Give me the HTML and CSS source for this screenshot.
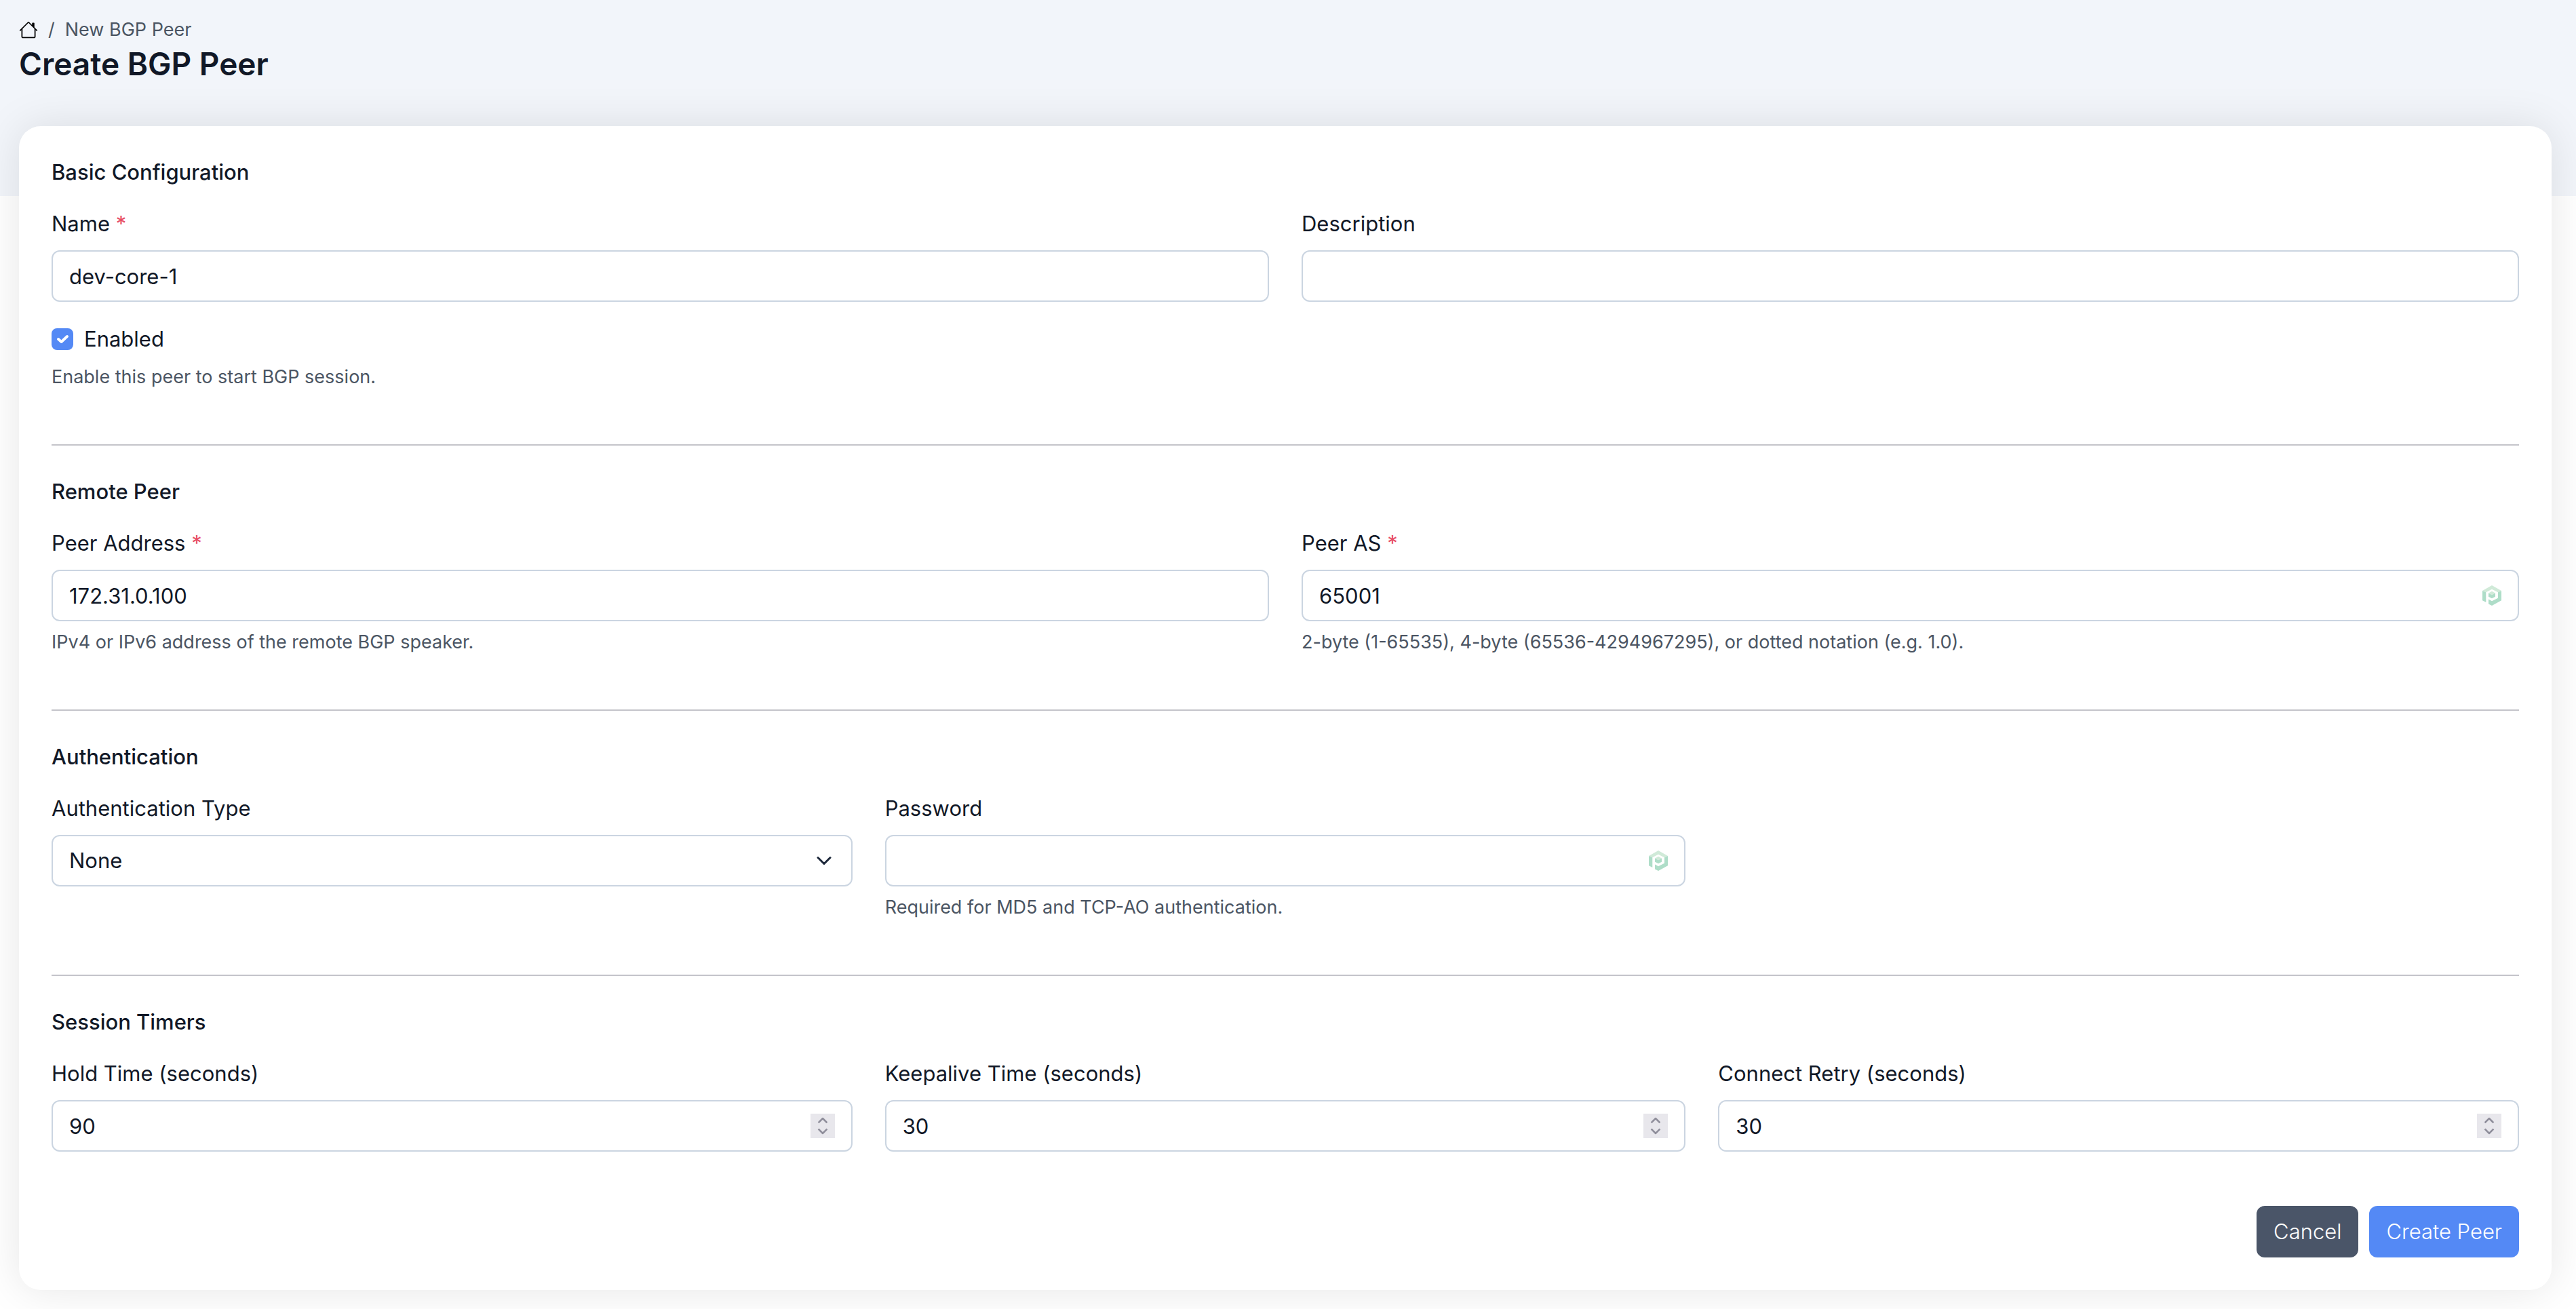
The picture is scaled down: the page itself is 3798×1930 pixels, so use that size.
FILE: index.html
```
<!DOCTYPE html>
<html lang="en">
<head>
  <meta charset="UTF-8">
  <meta name="viewport" content="width=device-width, initial-scale=1.0">
  <title>Create BGP Peer</title>
  <link rel="stylesheet" href="styles.css">
</head>
<body>
  <!-- Shared icons -->
  <svg class="sprite" aria-hidden="true">
    <symbol id="icon-pass" viewBox="0 0 28 30">
      <path fill="#d0ead8" d="M14 0 28 8 23 10.300 14 5.700 5.300 10.300 0 8z"/>
      <path fill="#aeddc8" d="M0 8 5.300 10.300V25L0 22.300z"/>
      <path fill="#aeddc8" d="M28 8V22.300L14 30 9 27.500V20.600L14 23.300 23 18.700V10.300z"/>
      <path fill="#d0ead8" d="M14 8.700 19 11.500 14 14.300 9 11.500z"/>
      <path fill="#aeddc8" d="M9 11.500 14 14.300 19 11.500V16.700L14 19.300 9 16.700z"/>
    </symbol>
    <symbol id="icon-spin" viewBox="0 0 36 36">
      <path fill="#e8e7ec" d="M0 0h36v36H0z"/>
      <path fill="none" stroke="#8f8e9b" stroke-width="2.500" stroke-linecap="square" stroke-linejoin="round" d="M12.500 12.500 18 7l5.500 5.500M12.500 23.500 18 29l5.500-5.500"/>
    </symbol>
  </svg>

  <header class="page-header">
    <nav class="breadcrumb" aria-label="Breadcrumb">
      <a href="#" aria-label="Home">
        <svg class="icon-home" viewBox="0 0 16 16"><path fill="#000" d="M8.707 1.500a1 1 0 0 0-1.414 0L.646 8.146a.5.5 0 0 0 .708.708L2 8.207V13.500A1.500 1.500 0 0 0 3.500 15h9a1.500 1.500 0 0 0 1.500-1.500V8.207l.646.647a.5.5 0 0 0 .708-.708L13 5.793V2.500a.5.5 0 0 0-.5-.5h-1a.5.5 0 0 0-.5.5v1.293zM13 7.207V13.500a.5.5 0 0 1-.5.5h-9a.5.5 0 0 1-.5-.5V7.207l5-5z"/></svg>
      </a>
      <span>/</span>
      <span>New BGP Peer</span>
    </nav>
    <h1>Create BGP Peer</h1>
  </header>

  <main>
    <form class="card">
      <section>
        <h2>Basic Configuration</h2>
        <div class="row cols-2">
          <div class="field">
            <label for="name">Name <span class="required">*</span></label>
            <input class="control" type="text" id="name" value="dev-core-1">
          </div>
          <div class="field">
            <label for="description">Description</label>
            <input class="control" type="text" id="description">
          </div>
        </div>
        <div class="check">
          <span class="check-box">
            <input type="checkbox" id="enabled" checked>
            <svg viewBox="0 0 32 32"><path fill="none" stroke="#fff" stroke-width="4" stroke-linecap="round" stroke-linejoin="round" d="M10 16l4.500 4L23 12"/></svg>
          </span>
          <label for="enabled">Enabled</label>
        </div>
        <p class="help">Enable this peer to start BGP session.</p>
      </section>

      <hr>

      <section>
        <h2>Remote Peer</h2>
        <div class="row cols-2">
          <div class="field">
            <label for="address">Peer Address <span class="required">*</span></label>
            <input class="control" type="text" id="address" value="172.31.0.100">
            <p class="help">IPv4 or IPv6 address of the remote BGP speaker.</p>
          </div>
          <div class="field">
            <label for="peer-as">Peer AS <span class="required">*</span></label>
            <div class="control-wrap">
              <input class="control" type="text" id="peer-as" value="65001">
              <svg class="icon-pass"><use href="#icon-pass"/></svg>
            </div>
            <p class="help">2-byte (1-65535), 4-byte (65536-4294967295), or dotted notation (e.g. 1.0).</p>
          </div>
        </div>
      </section>

      <hr>

      <section>
        <h2>Authentication</h2>
        <div class="row cols-3">
          <div class="field">
            <label for="auth-type">Authentication Type</label>
            <div class="control-wrap">
              <select class="control" id="auth-type">
                <option>None</option>
                <option>MD5</option>
                <option>TCP-AO</option>
              </select>
              <svg class="icon-chevron" viewBox="0 0 24 24"><path fill="none" stroke="#1e293b" stroke-width="3" stroke-linecap="round" stroke-linejoin="round" d="M3 7.500l9 9 9-9"/></svg>
            </div>
          </div>
          <div class="field">
            <label for="password">Password</label>
            <div class="control-wrap">
              <input class="control" type="password" id="password">
              <svg class="icon-pass"><use href="#icon-pass"/></svg>
            </div>
            <p class="help">Required for MD5 and TCP-AO authentication.</p>
          </div>
        </div>
      </section>

      <hr>

      <section>
        <h2>Session Timers</h2>
        <div class="row cols-3">
          <div class="field">
            <label for="hold">Hold Time (seconds)</label>
            <div class="control-wrap">
              <input class="control" type="number" id="hold" value="90">
              <svg class="icon-spin"><use href="#icon-spin"/></svg>
            </div>
          </div>
          <div class="field">
            <label for="keepalive">Keepalive Time (seconds)</label>
            <div class="control-wrap">
              <input class="control" type="number" id="keepalive" value="30">
              <svg class="icon-spin"><use href="#icon-spin"/></svg>
            </div>
          </div>
          <div class="field">
            <label for="retry">Connect Retry (seconds)</label>
            <div class="control-wrap">
              <input class="control" type="number" id="retry" value="30">
              <svg class="icon-spin"><use href="#icon-spin"/></svg>
            </div>
          </div>
        </div>
      </section>

      <div class="actions">
        <button class="btn btn-secondary" type="button">Cancel</button>
        <button class="btn btn-primary" type="submit">Create Peer</button>
      </div>
    </form>
  </main>
</body>
</html>
```

FILE: styles.css
```
* {
  box-sizing: border-box;
}
body {
  margin: 0;
  font-family: Inter, "Liberation Sans", sans-serif;
  font-size: 31px;
  line-height: 50px;
  color: #111827;
  background: #fff linear-gradient(#f2f5fa, #f2f5fa) no-repeat top / 100% 289px;
}
h1, h2, p {
  margin: 0;
}
.sprite {
  display: none;
}

/* Header */
.page-header {
  padding: 23px 28px 62px;
}
.breadcrumb {
  display: flex;
  align-items: center;
  gap: 15px;
  font-size: 27px;
  line-height: 42px;
  color: #4b5563;
}
.breadcrumb a {
  display: flex;
}
.icon-home {
  width: 28px;
  height: 28px;
}
h1 {
  font-size: 46px;
  font-weight: 600;
  line-height: 59px;
}

/* Card */
main {
  padding: 0 36px 28px 28px;
}
.card {
  padding: 48px;
  background: #fff;
  border-radius: 32px;
  box-shadow: 0 0 64px rgba(0, 0, 0, 0.1);
}
h2 {
  font-size: 31px;
  font-weight: 500;
  line-height: 39px;
  margin-bottom: 32px;
}
hr {
  margin: 78px 0 48px;
  border: 0;
  border-top: 2px solid #c4c4ca;
}

/* Fields */
.row {
  display: grid;
  gap: 48px;
}
.cols-2 {
  grid-template-columns: repeat(2, 1fr);
}
.cols-3 {
  grid-template-columns: repeat(3, 1fr);
}
.field label {
  display: block;
  margin-bottom: 14px;
}
.required {
  color: #e74c64;
}
.control-wrap {
  position: relative;
}
.control {
  display: block;
  width: 100%;
  height: 76px;
  padding: 0 24px;
  border: 2px solid #cbd5e1;
  border-radius: 12px;
  background: #fff;
  color: inherit;
  font: inherit;
  appearance: none;
}
.control[type="number"] {
  appearance: textfield;
}
.control::-webkit-inner-spin-button {
  display: none;
}
.control-wrap svg {
  position: absolute;
  top: 0;
  bottom: 0;
  right: 26px;
  margin: auto 0;
  pointer-events: none;
}
.control-wrap .icon-pass {
  width: 28px;
  height: 30px;
}
.control-wrap .icon-spin {
  width: 36px;
  height: 36px;
}
.control-wrap .icon-chevron {
  right: 30px;
  width: 24px;
  height: 24px;
}
.help {
  margin-top: 10px;
  font-size: 27px;
  line-height: 42px;
  color: #4b5563;
}

/* Checkbox */
.check {
  display: flex;
  align-items: center;
  gap: 16px;
  margin-top: 30px;
}
.check-box {
  position: relative;
  display: flex;
}
.check-box input {
  width: 32px;
  height: 32px;
  margin: 0;
  border: 2px solid #cbd5e1;
  border-radius: 8px;
  appearance: none;
}
.check-box input:checked {
  border-color: #5489f5;
  background: #5489f5;
}
.check-box svg {
  position: absolute;
  inset: 0;
  width: 32px;
  height: 32px;
  pointer-events: none;
}

/* Buttons */
.actions {
  display: flex;
  justify-content: flex-end;
  gap: 16px;
  margin-top: 80px;
}
.btn {
  height: 76px;
  padding: 0 25px;
  border: 0;
  border-radius: 12px;
  color: #fff;
  font: inherit;
  font-weight: 300;
  cursor: pointer;
}
.btn-secondary {
  background: #4a5568;
}
.btn-primary {
  background: #5489f5;
}
```
